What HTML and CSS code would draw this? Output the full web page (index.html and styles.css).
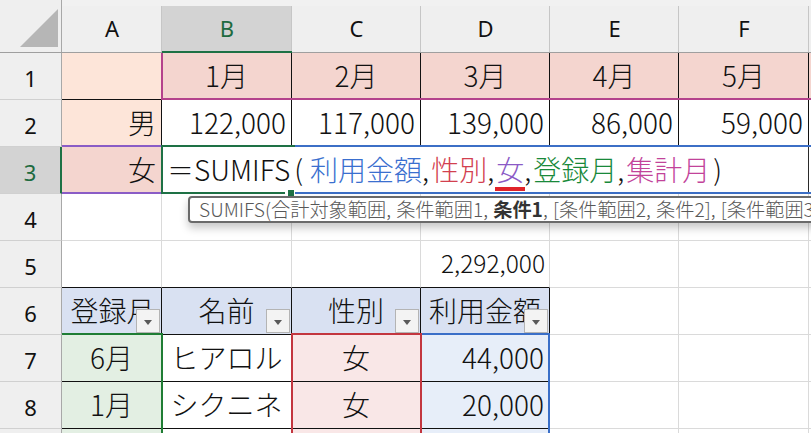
FILE: index.html
```html
<!DOCTYPE html>
<html lang="ja">
<head>
<meta charset="utf-8">
<title>SUMIFS</title>
<link rel="stylesheet" href="styles.css">
</head>
<body>
<div class="sheet">
  <div class="grid">
    <!-- column headers -->
    <div class="hc corner"><svg class="corner-tri" width="40" height="40" viewBox="0 0 40 40"><polygon points="1,38 39,0 39,38" fill="#b6b6b6"/></svg></div>
    <div class="hc">A</div>
    <div class="hc sel">B</div>
    <div class="hc">C</div>
    <div class="hc">D</div>
    <div class="hc">E</div>
    <div class="hc">F</div>
    <div class="hc"></div>

    <!-- row 1 -->
    <div class="rh">1</div>
    <div class="c peach bk"></div>
    <div class="c pink bk ctr">1月</div>
    <div class="c pink bk ctr">2月</div>
    <div class="c pink bk ctr">3月</div>
    <div class="c pink bk ctr">4月</div>
    <div class="c pink bk ctr">5月</div>
    <div class="c pink bk"></div>

    <!-- row 2 -->
    <div class="rh">2</div>
    <div class="c peach bk rt">男</div>
    <div class="c bk rt">122,000</div>
    <div class="c bk rt">117,000</div>
    <div class="c bk rt">139,000</div>
    <div class="c bk rt">86,000</div>
    <div class="c bk rt">59,000</div>
    <div class="c bk"></div>

    <!-- row 3 -->
    <div class="rh sel">3</div>
    <div class="c pink bk rt">女</div>
    <div class="c edit"><span class="eq">=</span>SUMIFS<span class="open">(</span><span class="r-blue">利用金額</span><span class="cm">,</span><span class="r-red">性別</span><span class="cm">,</span><span class="r-purple cur">女</span><span class="cm">,</span><span class="r-green">登録月</span><span class="cm">,</span><span class="r-mag">集計月</span><span class="close">)</span></div>
    <div class="c"></div>

    <!-- row 4 -->
    <div class="rh">4</div>
    <div class="c"></div><div class="c"></div><div class="c"></div><div class="c"></div><div class="c"></div><div class="c"></div><div class="c"></div>

    <!-- row 5 -->
    <div class="rh">5</div>
    <div class="c bkb"></div>
    <div class="c bkb"></div>
    <div class="c bkb"></div>
    <div class="c bkb rt small">2,292,000</div>
    <div class="c"></div><div class="c"></div><div class="c"></div>

    <!-- row 6 -->
    <div class="rh">6</div>
    <div class="c th bk"><span class="lbl lbl-a">登録月</span><span class="fb"></span></div>
    <div class="c th bk"><span class="lbl">名前</span><span class="fb"></span></div>
    <div class="c th bk"><span class="lbl">性別</span><span class="fb"></span></div>
    <div class="c th bk"><span class="lbl">利用金額</span><span class="fb"></span></div>
    <div class="c"></div><div class="c"></div><div class="c"></div>

    <!-- row 7 -->
    <div class="rh">7</div>
    <div class="c green bk ctr">6月</div>
    <div class="c bk ctr">ヒアロル</div>
    <div class="c rose bk ctr">女</div>
    <div class="c sky bk rt">44,000</div>
    <div class="c"></div><div class="c"></div><div class="c"></div>

    <!-- row 8 -->
    <div class="rh">8</div>
    <div class="c green bk ctr">1月</div>
    <div class="c bk ctr">シクニネ</div>
    <div class="c rose bk ctr">女</div>
    <div class="c sky bk rt">20,000</div>
    <div class="c"></div><div class="c"></div><div class="c"></div>

    <!-- row 9 -->
    <div class="rh"></div>
    <div class="c green bk"></div>
    <div class="c bk"></div>
    <div class="c rose bk"></div>
    <div class="c sky bk"></div>
    <div class="c"></div><div class="c"></div><div class="c"></div>
  </div>

  <!-- reference highlight frames and selection (overlays) -->
  <div class="frame f-mag"></div>
  <div class="frame f-purple"></div>
  <div class="frame f-blue"></div>
  <div class="frame f-red"></div>
  <div class="frame f-green"></div>
  <div class="edit-top"></div>
  <div class="edit-bottom"></div>
  <div class="active"></div>
  <div class="handle"></div>

  <div class="tip">SUMIFS(合計対象範囲, 条件範囲1, <b>条件1</b>, [条件範囲2, 条件2], [条件範囲3, 条件3], ...)</div>
</div>
</body>
</html>
```

FILE: styles.css
```css
* { box-sizing: border-box; }

html, body {
  margin: 0;
  padding: 0;
  background: #ffffff;
  overflow: hidden;
}

.sheet {
  position: relative;
  width: 811px;
  height: 433px;
  overflow: hidden;
  font-family: "Noto Sans CJK JP", "Noto Sans", sans-serif;
}

.grid {
  display: grid;
  grid-template-columns: 62px 100px 130px 129px 129px 129px 130px 40px;
  grid-template-rows: 53px repeat(8, 47px) 20px;
}

/* column headers */
.hc {
  position: relative;
  background: #efefef;
  border-bottom: 1px solid #9f9f9f;
  border-top: 6px solid #f1f1f1;
  display: flex;
  align-items: center;
  justify-content: center;
  font-family: "Noto Sans", sans-serif;
  font-size: 22px;
  line-height: 1;
  color: #111;
  padding-bottom: 2px;
}
.hc::after {
  content: "";
  position: absolute;
  right: 0;
  top: 0;
  bottom: 0;
  width: 1px;
  background: #c6c6c6;
}
.hc.corner {
  justify-content: flex-end;
  align-items: flex-end;
  padding: 0 3px 3px 0;
  border-top: none;
}
.hc.corner::after { background: #a8a8a8; }
.hc.sel {
  background: #d3d3d3;
  color: #1e6b40;
  border-bottom: 2px solid #1e7145;
}

/* row headers */
.rh {
  background: #efefef;
  border-right: 1px solid #a8a8a8;
  border-bottom: 1px solid #d0d0d0;
  display: flex;
  align-items: center;
  justify-content: center;
  font-family: "Noto Sans", sans-serif;
  font-size: 22px;
  line-height: 1;
  color: #111;
  padding-top: 4px;
}
.rh.sel {
  background: #d3d3d3;
  color: #1e6b40;
  border-right: 2px solid #1e7145;
}

/* cells */
.c {
  position: relative;
  border-right: 1px solid #dadada;
  border-bottom: 1px solid #dadada;
  display: flex;
  align-items: center;
  font-size: 28px;
  font-weight: 300;
  line-height: 1;
  color: #111;
  white-space: nowrap;
  padding: 0 5px 2px 5px;
}
.c.ctr { justify-content: center; }
.c.rt { justify-content: flex-end; }
.c.small { font-size: 24.5px; padding-right: 4px; }

.c.bk { border-right-color: #111; border-bottom-color: #111; }
.c.bkb { border-bottom-color: #111; }

.peach { background: #fde5d9; }
.pink { background: #f4d5cf; }
.green { background: #e3efe3; }
.rose { background: #f9e7e7; }
.sky { background: #e7eef9; }
.th { background: #d9e1f2; justify-content: center; overflow: hidden; padding: 0 0 2px 0; }

.lbl { display: block; }
.lbl-a { margin-right: -2px; }

.fb {
  position: absolute;
  right: 1px;
  bottom: 1px;
  width: 24px;
  height: 24px;
  background: #f3f3f3;
  border: 1px solid #b4b4b4;
}
.fb::after {
  content: "";
  position: absolute;
  left: 7px;
  top: 10px;
  border-left: 4px solid transparent;
  border-right: 4px solid transparent;
  border-top: 5px solid #5a5a5a;
}

/* formula being edited in B3, overflowing to F3 */
.edit {
  grid-column: span 5;
  background: #ffffff;
  border-right: 1px solid #2a2a2a;
  border-bottom: 1px solid #ffffff;
  padding-left: 5px;
  color: #111;
}
.eq {
  display: inline-block;
  width: 27px;
  text-align: center;
  transform: scaleX(1.5);
}
.open { margin: 0 7px 0 4px; }
.cm { margin: 0 2px 0 0; }
.close { margin-left: 3px; }
.r-blue { color: #3a6fcf; }
.r-red { color: #d2404f; }
.r-purple { color: #8b5ac6; }
.r-green { color: #19893a; }
.r-mag { color: #c2439a; }

.cur { position: relative; }
.cur::after {
  content: "";
  position: absolute;
  left: -1px;
  right: -1px;
  bottom: -8px;
  height: 4px;
  background: #e0232a;
}

/* overlays */
.frame { position: absolute; }
.f-mag {
  left: 161px; top: 53px; width: 700px; height: 47px;
  border-left: 2px solid #b4428c;
  border-bottom: 2px solid #b4428c;
}
.f-purple {
  left: 62px; top: 145px; width: 101px; height: 49px;
  border-top: 2px solid #8a5cc6;
  border-bottom: 2px solid #8a5cc6;
}
.f-green {
  left: 62px; top: 333px; width: 101px; height: 200px;
  border-top: 2px solid #1f7d34;
  border-right: 2px solid #1f7d34;
}
.f-red {
  left: 291px; top: 333px; width: 131px; height: 200px;
  border: 2px solid #c3363f;
  border-bottom: none;
}
.f-blue {
  left: 420px; top: 333px; width: 130px; height: 200px;
  border: 2px solid #3a6fc8;
  border-bottom: none;
}
.edit-top {
  position: absolute;
  left: 292px; top: 145px; width: 520px; height: 2px;
  background: #3c6fc6;
}
.edit-bottom {
  position: absolute;
  left: 292px; top: 192px; width: 520px; height: 2px;
  background: #3c6fc6;
}
.active {
  position: absolute;
  left: 161px; top: 145px; width: 124px; height: 49px;
  border-left: 2px solid #1e7145;
  border-top: 2px solid #1e7145;
  border-bottom: 2px solid #1e7145;
}
.active::after {
  content: "";
  position: absolute;
  left: 122px; top: -2px;
  width: 10px; height: 2px;
  background: #1e7145;
}
.handle {
  position: absolute;
  left: 288px; top: 190px; width: 6px; height: 6px;
  background: #1e7145;
  outline: 1px solid #ffffff;
}

.tip {
  position: absolute;
  left: 188px; top: 196px;
  height: 27px;
  padding: 0 8px 0 9px;
  background: #ffffff;
  border: 2px solid #6a6a6a;
  border-radius: 4px;
  box-shadow: 0 5px 8px rgba(0, 0, 0, 0.22);
  font-family: "Noto Sans CJK JP", "Noto Sans", sans-serif;
  font-size: 19.2px;
  font-weight: 300;
  word-spacing: 1px;
  line-height: 22px;
  color: #585858;
  white-space: nowrap;
}
.tip b { color: #333; font-weight: 700; }
```
